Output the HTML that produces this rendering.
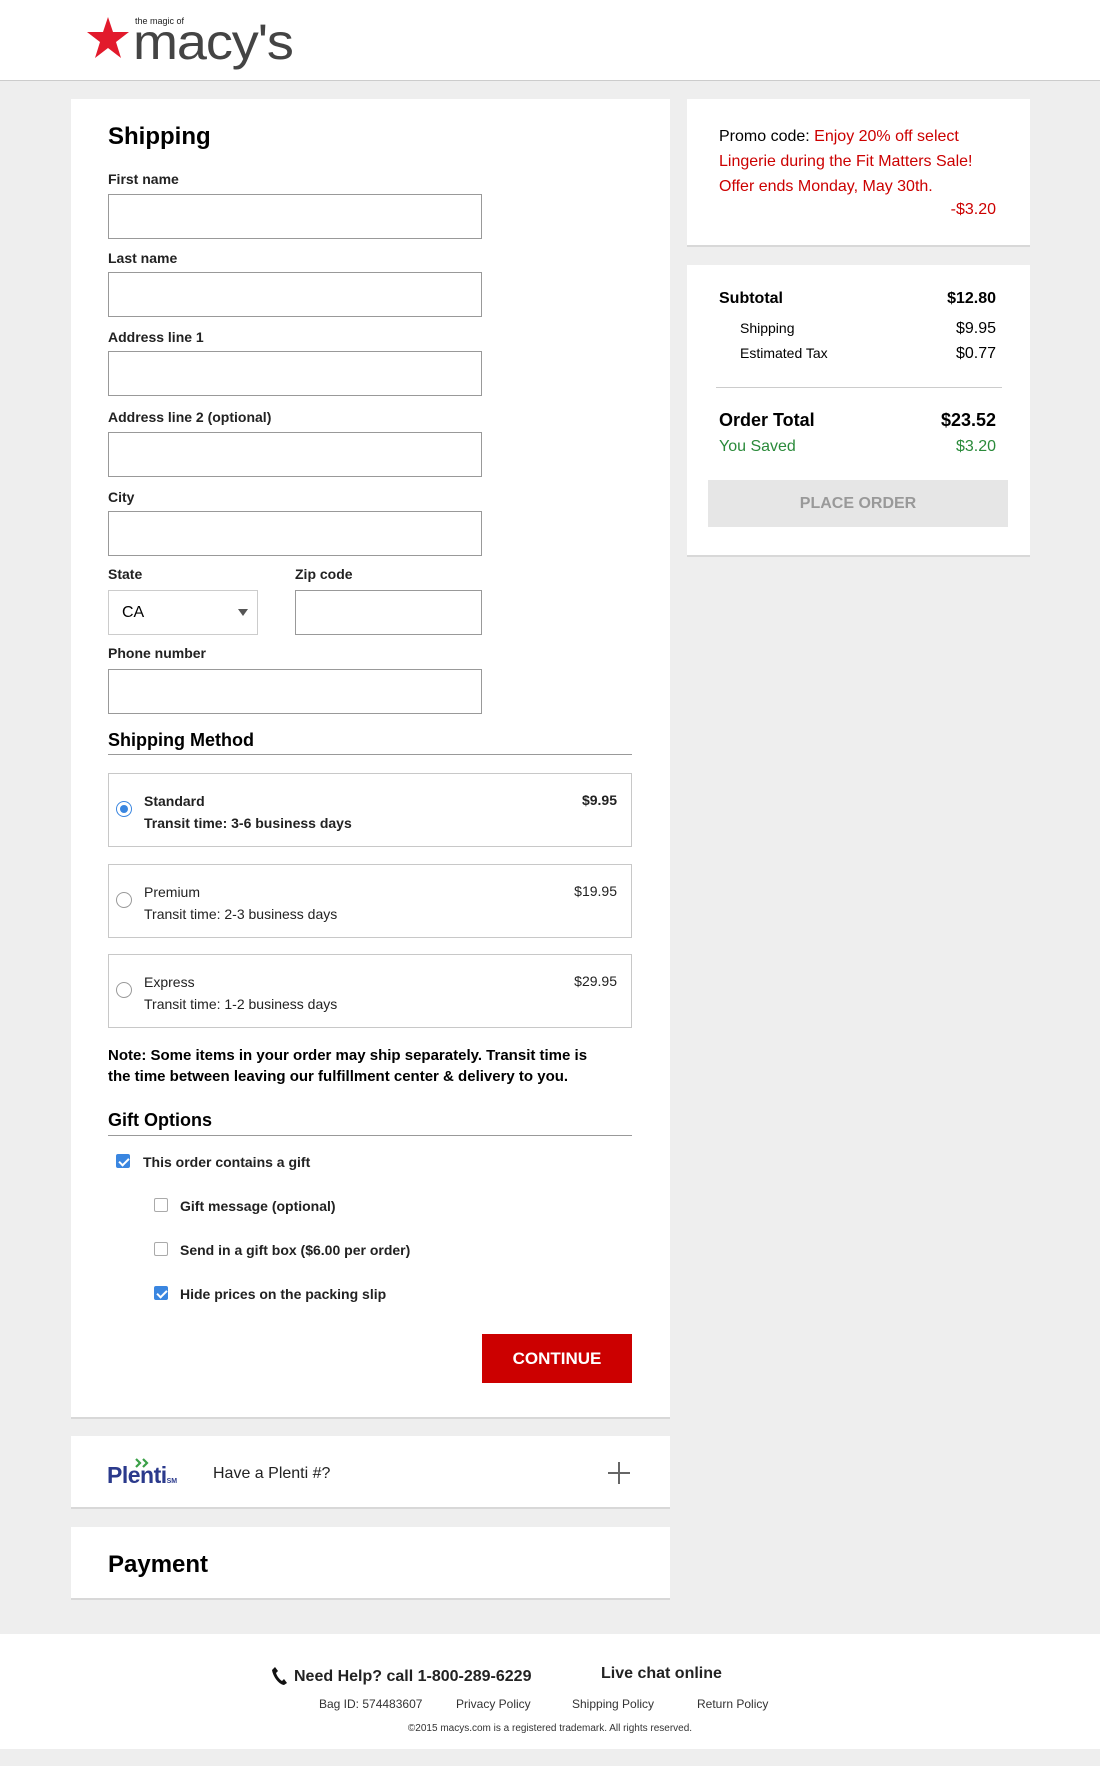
<!DOCTYPE html>
<html><head><meta charset="utf-8"><style>
*{box-sizing:border-box;margin:0;padding:0}
body{width:1100px;height:1766px;background:#eeeeee;font-family:"Liberation Sans",Arial,sans-serif;color:#000;position:relative;overflow:hidden}
.a{position:absolute}
.card{position:absolute;background:#fff;border-bottom:2px solid #d8d8d8}
.lbl{position:absolute;left:108px;font-size:14px;font-weight:bold;color:#222}
.inp{position:absolute;left:108px;width:374px;height:45px;border:1px solid #999;background:#fff}
.opt{position:absolute;left:108px;width:524px;height:74px;border:1px solid #c8c8c8}
.opt .t{position:absolute;left:35px;top:16px;font-size:14px;line-height:22px;color:#222}
.opt .p{position:absolute;right:14px;top:18px;font-size:14px;color:#222}
.opt .r{position:absolute;left:7px;top:27px;width:16px;height:16px;border:1px solid #999;border-radius:50%}
.cb{position:absolute;width:14px;height:14px;border:1px solid #aaa;border-radius:2px;background:#fff}
.cb.on{background:#3a86e0;border-color:#3a86e0}
.cb.on:after{content:"";position:absolute;left:4px;top:1px;width:4px;height:8px;border:solid #fff;border-width:0 2px 2px 0;transform:rotate(45deg)}
.ct{position:absolute;font-size:14px;font-weight:bold;color:#222}
.rt{position:absolute;font-size:16px}
</style></head><body>
<div class="a" style="left:0;top:0;width:1100px;height:81px;background:#fff;border-bottom:1px solid #ccc"></div>
<svg class="a" style="left:86px;top:17px" width="44" height="42" viewBox="0 0 44 42"><polygon points="22,0 27,15 43,15 30,25 35,41 22,31 9,41 14,25 1,15 17,15" fill="#e21a2c"/></svg>
<div class="a" style="left:135px;top:16px;font-size:9px;color:#222">the magic of</div>
<div class="a" style="left:133px;top:14px;font-size:50px;color:#444;letter-spacing:-1px;line-height:56px;transform:scaleX(1.08);transform-origin:left">macy's</div>

<div class="card" style="left:71px;top:99px;width:599px;height:1320px"></div>
<div class="a" style="left:108px;top:123px;font-size:24px;font-weight:bold">Shipping</div>
<div class="lbl" style="top:171px">First name</div><div class="inp" style="top:194px"></div>
<div class="lbl" style="top:250px">Last name</div><div class="inp" style="top:272px"></div>
<div class="lbl" style="top:329px">Address line 1</div><div class="inp" style="top:351px"></div>
<div class="lbl" style="top:409px">Address line 2 (optional)</div><div class="inp" style="top:432px"></div>
<div class="lbl" style="top:489px">City</div><div class="inp" style="top:511px"></div>
<div class="lbl" style="top:566px">State</div><div class="lbl" style="top:566px;left:295px">Zip code</div>
<div class="inp" style="top:590px;width:150px;border-color:#ccc"><span style="position:absolute;left:13px;top:13px;font-size:16px">CA</span><span style="position:absolute;right:9px;top:18px;border:5px solid transparent;border-top:7px solid #555"></span></div>
<div class="inp" style="top:590px;left:295px;width:187px"></div>
<div class="lbl" style="top:645px">Phone number</div><div class="inp" style="top:669px"></div>
<div class="a" style="left:108px;top:730px;font-size:18px;font-weight:bold">Shipping Method</div>
<div class="a" style="left:108px;top:754px;width:524px;height:1px;background:#999"></div>
<div class="opt" style="top:773px"><div class="r" style="border-color:#3a86e0"><div style="position:absolute;left:3px;top:3px;width:8px;height:8px;border-radius:50%;background:#3a86e0"></div></div><div class="t" style="font-weight:bold">Standard<br>Transit time: 3-6 business days</div><div class="p" style="font-weight:bold">$9.95</div></div>
<div class="opt" style="top:864px"><div class="r"></div><div class="t">Premium<br>Transit time: 2-3 business days</div><div class="p">$19.95</div></div>
<div class="opt" style="top:954px"><div class="r"></div><div class="t">Express<br>Transit time: 1-2 business days</div><div class="p">$29.95</div></div>
<div class="a" style="left:108px;top:1045px;width:505px;font-size:15px;font-weight:bold;line-height:21px">Note: Some items in your order may ship separately. Transit time is<br>the time between leaving our fulfillment center &amp; delivery to you.</div>
<div class="a" style="left:108px;top:1110px;font-size:18px;font-weight:bold">Gift Options</div>
<div class="a" style="left:108px;top:1135px;width:524px;height:1px;background:#999"></div>
<div class="cb on" style="left:116px;top:1154px"></div><div class="ct" style="left:143px;top:1154px">This order contains a gift</div>
<div class="cb" style="left:154px;top:1198px"></div><div class="ct" style="left:180px;top:1198px">Gift message (optional)</div>
<div class="cb" style="left:154px;top:1242px"></div><div class="ct" style="left:180px;top:1242px">Send in a gift box ($6.00 per order)</div>
<div class="cb on" style="left:154px;top:1286px"></div><div class="ct" style="left:180px;top:1286px">Hide prices on the packing slip</div>
<div class="a" style="left:482px;top:1334px;width:150px;height:49px;background:#cc0000;color:#fff;font-weight:bold;font-size:17px;text-align:center;line-height:49px">CONTINUE</div>

<div class="card" style="left:71px;top:1436px;width:599px;height:73px"></div>
<svg class="a" style="left:134px;top:1458px" width="20" height="10"><path d="M2 1l4 4-4 4M9 1l4 4-4 4" stroke="#3aa047" stroke-width="2.2" fill="none"/></svg>
<div class="a" style="left:107px;top:1462px;font-size:23px;font-weight:bold;color:#2b3a8c;letter-spacing:-0.5px">Plenti<span style="font-size:7px;letter-spacing:0">SM</span></div>
<div class="a" style="left:213px;top:1465px;font-size:16px;color:#222">Have a Plenti #?</div>
<div class="a" style="left:608px;top:1472px;width:22px;height:2px;background:#666"></div>
<div class="a" style="left:618px;top:1462px;width:2px;height:22px;background:#666"></div>

<div class="card" style="left:71px;top:1527px;width:599px;height:73px"></div>
<div class="a" style="left:108px;top:1551px;font-size:24px;font-weight:bold">Payment</div>

<div class="card" style="left:687px;top:99px;width:343px;height:148px"></div>
<div class="rt" style="left:719px;top:124px;line-height:25px;color:#cc0000;width:290px"><span style="color:#000">Promo code:</span> Enjoy 20% off select Lingerie during the Fit Matters Sale! Offer ends Monday, May 30th.</div>
<div class="rt" style="right:104px;top:201px;color:#cc0000">-$3.20</div>

<div class="card" style="left:687px;top:265px;width:343px;height:292px"></div>
<div class="rt" style="left:719px;top:290px;font-weight:bold">Subtotal</div><div class="rt" style="right:104px;top:290px;font-weight:bold">$12.80</div>
<div class="a" style="left:740px;top:320px;font-size:14px">Shipping</div><div class="rt" style="right:104px;top:320px">$9.95</div>
<div class="a" style="left:740px;top:345px;font-size:14px">Estimated Tax</div><div class="rt" style="right:104px;top:345px">$0.77</div>
<div class="a" style="left:716px;top:387px;width:286px;height:1px;background:#ccc"></div>
<div class="a" style="left:719px;top:410px;font-size:18px;font-weight:bold">Order Total</div><div class="a" style="right:104px;top:410px;font-size:18px;font-weight:bold">$23.52</div>
<div class="rt" style="left:719px;top:438px;color:#2a8a3a">You Saved</div><div class="rt" style="right:104px;top:438px;color:#2a8a3a">$3.20</div>
<div class="a" style="left:708px;top:480px;width:300px;height:47px;background:#e6e6e6;color:#999;font-size:16px;font-weight:bold;text-align:center;line-height:47px">PLACE ORDER</div>

<div class="a" style="left:0;top:1634px;width:1100px;height:115px;background:#fff"></div>
<svg class="a" style="left:271px;top:1666px" width="16" height="20" viewBox="0 0 16 20"><path d="M4 1l3 4-2 2c1 3 3 6 6 8l2-2 3 4-3 2C7 18 2 10 1 4z" fill="#111"/></svg>
<div class="a" style="left:294px;top:1668px;font-size:16px;font-weight:bold;color:#222">Need Help? call 1-800-289-6229</div>
<div class="a" style="left:601px;top:1665px;font-size:16px;font-weight:bold;color:#222">Live chat online</div>
<div class="a" style="left:319px;top:1697px;font-size:12px;color:#333">Bag ID: 574483607</div>
<div class="a" style="left:456px;top:1697px;font-size:12px;color:#333">Privacy Policy</div>
<div class="a" style="left:572px;top:1697px;font-size:12px;color:#333">Shipping Policy</div>
<div class="a" style="left:697px;top:1697px;font-size:12px;color:#333">Return Policy</div>
<div class="a" style="left:0;width:1100px;text-align:center;top:1723px;font-size:10px;color:#333">©2015 macys.com is a registered trademark. All rights reserved.</div>
</body></html>
